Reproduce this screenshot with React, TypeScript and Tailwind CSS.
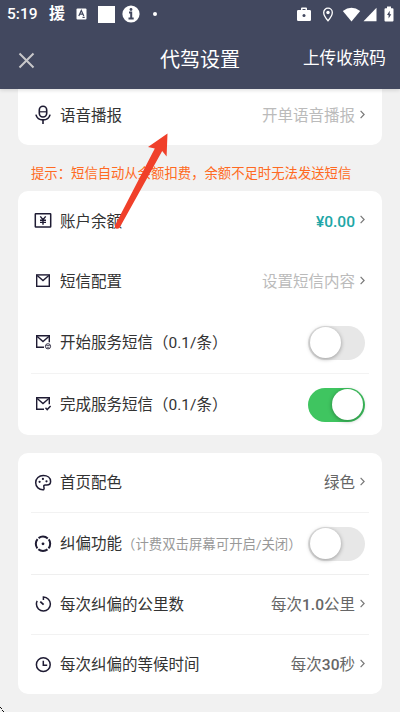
import type { ReactNode } from 'react'

const DARK = '#1e1b33'

function MicIcon() {
  return (
    <svg width="18" height="20" viewBox="0 0 18 20" fill="none" stroke={DARK} strokeWidth="1.6">
      <rect x="5.3" y="1.2" width="7.4" height="10.8" rx="3.7" />
      <path d="M5.3 6.8h7.4" strokeWidth="1.2" />
      <path d="M1.9 9.6c.9 3.4 3.6 5.3 7.1 5.3s6.2-1.9 7.1-5.3" />
      <path d="M9 15v4" />
    </svg>
  )
}

function YenIcon() {
  return (
    <svg width="18" height="18" viewBox="0 0 18 18" fill="none" stroke={DARK} strokeWidth="1.5">
      <rect x="1.3" y="2.7" width="15.4" height="13.4" rx=".5" />
      <path d="M6.3 5.4 9 8.7l2.7-3.3M9 8.5v5.2M6 9.2h6M6 11.4h6" strokeWidth="1.4" />
    </svg>
  )
}

function MailIcon({ badge }: { badge?: 'smile' | 'check' }) {
  return (
    <svg width="18" height="18" viewBox="0 0 18 18" fill="none" stroke={DARK} strokeWidth="1.4">
      {badge ? <path d="M10 14.3H2.7V2.7h12.6v6.5" /> : <rect x="2.7" y="2.9" width="12.6" height="11.4" />}
      <path d="m3.2 3.5 5.8 5 5.8-5" />
      {badge === 'smile' && (
        <>
          <circle cx="14" cy="13.3" r="2.6" strokeWidth=".9" />
          <path d="M12.3 12.5h3.4M12.8 14q1.2 1 2.4 0" strokeWidth=".7" />
        </>
      )}
      {badge === 'check' && <path d="m11.5 12.7 1.7 1.9 3.4-3.6" />}
    </svg>
  )
}

function PaletteIcon() {
  return (
    <svg width="18" height="18" viewBox="0 0 18 18" fill="none" stroke={DARK} strokeWidth="1.5">
      <path d="M9.6 16.7C5 17.100 1.700 13.700 1.700 9.700c0-4.200 3.300-7.200 7.600-7.200 4.200 0 7.300 2.400 7.300 5.900 0 2.500-1.700 3.500-3.700 3.500h-1.600c-1.400 0-1.800.9-1.400 2.100.3.900.4 1.900-.3 2.700Z" />
      <g fill={DARK} stroke="none">
        <circle cx="5.6" cy="8.8" r="1.1" />
        <circle cx="8.9" cy="5.9" r="1.1" />
        <circle cx="12.5" cy="8.3" r="1.1" />
      </g>
    </svg>
  )
}

function TargetIcon() {
  return (
    <svg width="18" height="18" viewBox="0 0 18 18" fill="none" stroke={DARK}>
      <circle cx="9" cy="9.8" r="7.2" strokeWidth="2" strokeDasharray="9.9 1.41" strokeDashoffset="4.95" />
      <circle cx="9" cy="9.8" r="1.4" fill={DARK} stroke="none" />
    </svg>
  )
}

function GaugeIcon() {
  return (
    <svg width="18" height="18" viewBox="0 0 18 18" fill="none" stroke={DARK} strokeWidth="1.5">
      <path d="M9.4 5V2.1c4 .2 7 3.1 7 7a7 7 0 0 1-14 0c0-1.200.3-2.300.8-3.200" />
      <path d="m6.3 6.7 3.3 3" strokeWidth="1.8" />
    </svg>
  )
}

function ClockIcon() {
  return (
    <svg width="18" height="18" viewBox="0 0 18 18" fill="none" stroke={DARK} strokeWidth="1.5">
      <circle cx="9.3" cy="9.7" r="6.9" />
      <path d="M9.3 5.7v4.6h3.9" />
    </svg>
  )
}

function Chevron() {
  return (
    <svg className="mb-[3px] ml-[5px]" width="5" height="9" viewBox="0 0 5 9" fill="none" stroke="#777" strokeWidth="1.2">
      <path d="m.6.9 3.5 3.6L.6 8.1" />
    </svg>
  )
}

function Toggle({ on }: { on?: boolean }) {
  return (
    <span className={`mr-[0.5px] flex h-[34px] w-[56.5px] items-center rounded-full px-[1.5px] ${on ? 'justify-end bg-[#3fc560]' : 'justify-start bg-[#e7e7e7]'}`}>
      <span className="size-[31px] rounded-full bg-white shadow-[0_1px_4px_rgba(0,0,0,0.35)]" />
    </span>
  )
}

type RowProps = {
  icon: ReactNode
  label: string
  note?: string
  value?: ReactNode
  valueClass?: string
  toggle?: 'on' | 'off'
  className: string
}

function Row({ icon, label, note, value, valueClass = 'text-[#666]', toggle, className }: RowProps) {
  return (
    <div className={`mx-[13px] flex items-center whitespace-nowrap ${className}`}>
      <span className="mb-[2px] ml-[3px] flex w-[26px] shrink-0">{icon}</span>
      <span className="pt-[3px] text-[15.5px] text-[#333]">{label}</span>
      {note && <span className="pt-[3px] text-[13.4px] text-[#999]">{note}</span>}
      <span className="ml-auto mr-1 flex items-center">
        {value && (
          <>
            <span className={`pt-[3px] text-[15.5px] ${valueClass}`}>{value}</span>
            <Chevron />
          </>
        )}
        {toggle && <Toggle on={toggle === 'on'} />}
      </span>
    </div>
  )
}

function StatusBar() {
  return (
    <div className="flex h-7 items-center justify-between pl-[7px] pr-1.5">
      <div className="flex items-center">
        <span className="w-[42px] pt-[2px] text-[15.5px] font-medium">5:19</span>
        <span className="w-[27px] text-[16px] font-bold leading-5">援</span>
        <svg className="mr-[11px]" width="11" height="12" viewBox="0 0 11 12">
          <rect x=".5" y=".5" width="10" height="11" rx="1" fill="#fff" />
          <path d="m2.800 8 2.500-5.500L7.800 8M3.600 6.200H7M6.500 9.300h2.200" fill="none" stroke="#42485f" strokeWidth="1.2" />
        </svg>
        <span className="size-[17px] bg-white" />
        <svg className="ml-[7px]" width="18" height="18" viewBox="0 0 18 18">
          <circle cx="9" cy="9" r="8.6" fill="#fff" />
          <path d="M7 7.500h2.200v5.700M6.500 13.500h5.200" fill="none" stroke="#42485f" strokeWidth="2" />
          <circle cx="9" cy="4.500" r="1.400" fill="#42485f" />
        </svg>
        <span className="ml-[13px] size-1 rounded-full bg-white" />
      </div>
      <div className="flex items-center">
        <svg width="16" height="15" viewBox="0 0 16 15">
          <path d="M5 3V1.500Q5 .5 6 .5h4q1 0 1 1V3h2.700q1.300 0 1.300 1.300v8.400q0 1.300-1.300 1.300H2.300Q1 14 1 12.700V4.300Q1 3 2.300 3Zm1.500 0h3V2h-3Z" fill="#fff" fillRule="evenodd" />
          <circle cx="8" cy="8.500" r="1.500" fill="#42485f" />
        </svg>
        <svg className="ml-[10px]" width="12" height="15" viewBox="0 0 12 15">
          <path d="M6 13.700C3.300 10.700 1.700 8 1.700 5.500a4.300 4.300 0 0 1 8.600 0C10.300 8 8.700 10.700 6 13.700Z" fill="none" stroke="#fff" strokeWidth="1.300" />
          <circle cx="6" cy="5.500" r="1.700" fill="#fff" />
        </svg>
        <svg className="ml-2" width="19" height="15" viewBox="0 0 19 15">
          <path d="M.8 4Q9.500-2.500 18.200 4L9.500 14.500Z" fill="#fff" />
        </svg>
        <svg className="ml-0.5" width="14" height="15" viewBox="0 0 14 15">
          <path d="M13.500.8v13.400H.5Z" fill="#fff" />
        </svg>
        <svg className="ml-[7px]" width="10" height="16" viewBox="0 0 10 16">
          <path d="M3 .5h4v1.700h1.500q1 0 1 1v11.300q0 1-1 1h-7q-1 0-1-1V3.200q0-1 1-1H3Z" fill="#fff" />
          <path d="m5.700 4.800-2.700 4.200h1.600v3.500l2.700-4.200H5.700Z" fill="#42485f" />
        </svg>
      </div>
    </div>
  )
}

export default function App() {
  return (
    <div className="relative flex h-[712px] w-[400px] flex-col overflow-hidden bg-[#f1f1f1] font-['Roboto','Noto_Sans_CJK_SC',sans-serif]">
      <header className="z-10 h-[89px] shrink-0 bg-[#42485f] text-white shadow-[0_1px_4px_rgba(0,0,0,0.15)]">
        <StatusBar />
        <div className="grid h-[61px] grid-cols-[100px_1fr_100px] items-center whitespace-nowrap">
          <svg className="ml-[18px] mt-1" width="17" height="17" viewBox="0 0 17 17" fill="none" stroke="#c8c8ca" strokeWidth="2">
            <path d="m1.500 1.500 14 14m0-14-14 14" />
          </svg>
          <h1 className="pt-[3px] text-center text-[20px]">代驾设置</h1>
          <span className="ml-[3px] pt-[2px] text-[16.6px]">上传收款码</span>
        </div>
      </header>

      <main className="px-[18px]">
        <section className="h-14 rounded-b-[10px] bg-white">
          <Row className="h-[53px]" icon={<MicIcon />} label="语音播报" value="开单语音播报" valueClass="text-[#bbb]" />
        </section>

        <p className="ml-[13px] flex h-[46px] items-center whitespace-nowrap pt-3 text-[13.35px] text-[#ff6a22]">
          提示：短信自动从余额扣费，余额不足时无法发送短信
        </p>

        <section className="rounded-[10px] bg-white">
          <Row className="h-[60px]" icon={<YenIcon />} label="账户余额" value="¥0.00" valueClass="font-medium text-[#20a6a6]" />
          <Row className="h-[61px]" icon={<MailIcon />} label="短信配置" value="设置短信内容" valueClass="text-[#bbb]" />
          <Row className="h-[62px] border-b border-[#f3f3f3]" icon={<MailIcon badge="smile" />} label="开始服务短信（0.1/条）" toggle="off" />
          <Row className="h-[61px]" icon={<MailIcon badge="check" />} label="完成服务短信（0.1/条）" toggle="on" />
        </section>

        <section className="mt-[18px] rounded-[10px] bg-white">
          <Row className="h-[60px] border-b border-[#f2f2f2]" icon={<PaletteIcon />} label="首页配色" value="绿色" />
          <Row className="h-[62px] border-b border-[#efefef]" icon={<TargetIcon />} label="纠偏功能" note="（计费双击屏幕可开启/关闭）" toggle="off" />
          <Row
            className="h-[60px] border-b border-[#f2f2f2]"
            icon={<GaugeIcon />}
            label="每次纠偏的公里数"
            value={<>每次<span className="font-medium">1.0</span>公里</>}
          />
          <Row
            className="h-[59px]"
            icon={<ClockIcon />}
            label="每次纠偏的等候时间"
            value={<>每次<span className="font-medium">30</span>秒</>}
          />
        </section>
      </main>

      {/* arrow annotation over the list */}
      <svg className="pointer-events-none absolute left-[110px] top-[128px] z-20" width="64" height="104" viewBox="110 128 64 104">
        <path d="M167.500 133.500 148 147l6.800 1.500-40 77.300q-.3 2.300 1.700 3 2 .2 3.200-1.300l42.500-76.500 4.400 5.500Z" fill="#f0402a" />
      </svg>
      <svg className="absolute bottom-0 left-0" width="5" height="5" viewBox="0 0 5 5">
        <path d="M0 0h1v1H0ZM1 1h1v1H1ZM2 3h1v1H2ZM3 4h1v1H3Z" fill="#111" />
      </svg>
    </div>
  )
}
